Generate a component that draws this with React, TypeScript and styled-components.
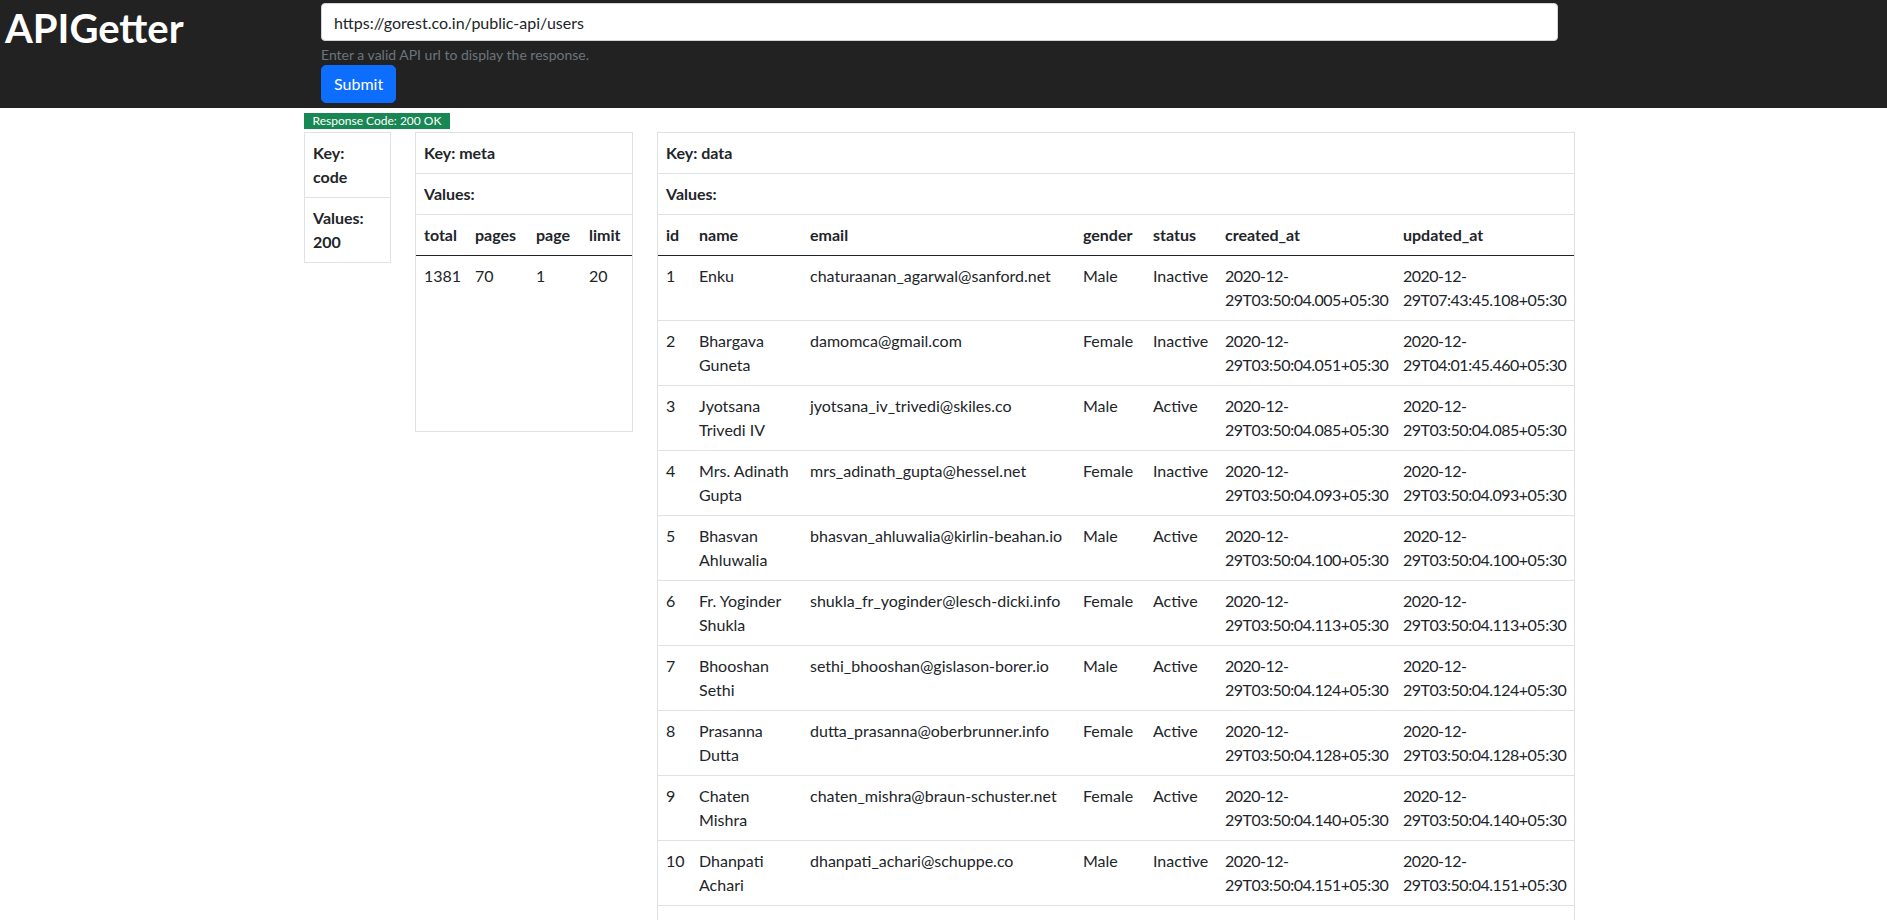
import styled, { createGlobalStyle } from "styled-components";

const GlobalStyle = createGlobalStyle`
  body {
    margin: 0;
    font-family: Lato, "Open Sans", sans-serif;
    font-size: 16px;
    line-height: 1.5;
    color: #212529;
    background: #fff;
  }
  * {
    box-sizing: border-box;
  }
`;

const Header = styled.header`
  display: flex;
  height: 108px;
  padding: 3px 0 5px 5px;
  background-color: #222;
`;

const Brand = styled.h1`
  width: 316px;
  margin: 0;
  padding-top: 1px;
  font-size: 40px;
  font-weight: 700;
  line-height: 48px;
  color: #fff;
`;

const UrlForm = styled.form`
  display: flex;
  flex-direction: column;
  align-items: flex-start;
  width: 1237px;
`;

const UrlInput = styled.input`
  width: 100%;
  height: 38px;
  padding: 6px 12px;
  border: 1px solid #ced4da;
  border-radius: 4px;
  font-family: inherit;
  font-size: 16px;
  color: #212529;
  background: #fff;
`;

const HelpText = styled.div`
  margin-top: 4px;
  font-size: 14px;
  line-height: 20px;
  color: #6c757d;
`;

const SubmitButton = styled.button`
  height: 38px;
  padding: 6px 12px;
  border: 1px solid #0d6efd;
  border-radius: 5px;
  background-color: #0d6efd;
  font-family: inherit;
  font-size: 16px;
  line-height: 24px;
  color: #fff;
  cursor: pointer;
`;

const Main = styled.main`
  padding: 5px 0 0 304px;
`;

const Badge = styled.div`
  width: 146px;
  height: 16px;
  background-color: #198754;
  font-size: 12px;
  line-height: 16px;
  text-align: center;
  white-space: nowrap;
  color: #fff;
`;

const Panels = styled.div`
  display: flex;
  align-items: flex-start;
  gap: 24px;
  margin-top: 3px;
`;

const Panel = styled.section<{ $width: number }>`
  width: ${(p) => p.$width}px;
  border: 1px solid #dee2e6;
`;

const KeyRow = styled.div`
  padding: 8px;
  font-weight: 700;
  line-height: 24px;
  border-bottom: 1px solid #dee2e6;
  &:last-child {
    border-bottom: none;
  }
`;

const ValueTable = styled.table`
  width: 100%;
  table-layout: fixed;
  border-collapse: collapse;
`;

const HeadRow = styled.tr`
  border-bottom: 1px solid #212529;
`;

const HeadCell = styled.th`
  padding: 8px;
  text-align: left;
  font-weight: 700;
  line-height: 24px;
  vertical-align: bottom;
`;

const BodyRow = styled.tr<{ $height?: number }>`
  height: ${(p) => (p.$height ? `${p.$height}px` : "auto")};
  border-bottom: 1px solid #dee2e6;
  &:last-child {
    border-bottom: none;
  }
`;

const BodyCell = styled.td<{ $tight?: boolean }>`
  padding: 8px;
  line-height: 24px;
  vertical-align: top;
  letter-spacing: ${(p) => (p.$tight ? "-0.5px" : "normal")};
`;

interface IColumn {
  key: string;
  width: number;
  tight?: boolean;
}

const metaColumns: IColumn[] = [
  { key: "total", width: 51 },
  { key: "pages", width: 61 },
  { key: "page", width: 53 },
  { key: "limit", width: 51 },
];

const dataColumns: IColumn[] = [
  { key: "id", width: 33 },
  { key: "name", width: 111 },
  { key: "email", width: 273 },
  { key: "gender", width: 70 },
  { key: "status", width: 72 },
  { key: "created_at", width: 178, tight: true },
  { key: "updated_at", width: 179, tight: true },
];

const meta = [{ total: 1381, pages: 70, page: 1, limit: 20 }];

const stamp = (t: string) => `2020-12-29T${t}+05:30`;

const users = [
  { id: 1, name: "Enku", email: "chaturaanan_agarwal@sanford.net", gender: "Male", status: "Inactive", created_at: stamp("03:50:04.005"), updated_at: stamp("07:43:45.108") },
  { id: 2, name: "Bhargava Guneta", email: "damomca@gmail.com", gender: "Female", status: "Inactive", created_at: stamp("03:50:04.051"), updated_at: stamp("04:01:45.460") },
  { id: 3, name: "Jyotsana Trivedi IV", email: "jyotsana_iv_trivedi@skiles.co", gender: "Male", status: "Active", created_at: stamp("03:50:04.085"), updated_at: stamp("03:50:04.085") },
  { id: 4, name: "Mrs. Adinath Gupta", email: "mrs_adinath_gupta@hessel.net", gender: "Female", status: "Inactive", created_at: stamp("03:50:04.093"), updated_at: stamp("03:50:04.093") },
  { id: 5, name: "Bhasvan Ahluwalia", email: "bhasvan_ahluwalia@kirlin-beahan.io", gender: "Male", status: "Active", created_at: stamp("03:50:04.100"), updated_at: stamp("03:50:04.100") },
  { id: 6, name: "Fr. Yoginder Shukla", email: "shukla_fr_yoginder@lesch-dicki.info", gender: "Female", status: "Active", created_at: stamp("03:50:04.113"), updated_at: stamp("03:50:04.113") },
  { id: 7, name: "Bhooshan Sethi", email: "sethi_bhooshan@gislason-borer.io", gender: "Male", status: "Active", created_at: stamp("03:50:04.124"), updated_at: stamp("03:50:04.124") },
  { id: 8, name: "Prasanna Dutta", email: "dutta_prasanna@oberbrunner.info", gender: "Female", status: "Active", created_at: stamp("03:50:04.128"), updated_at: stamp("03:50:04.128") },
  { id: 9, name: "Chaten Mishra", email: "chaten_mishra@braun-schuster.net", gender: "Female", status: "Active", created_at: stamp("03:50:04.140"), updated_at: stamp("03:50:04.140") },
  { id: 10, name: "Dhanpati Achari", email: "dhanpati_achari@schuppe.co", gender: "Male", status: "Inactive", created_at: stamp("03:50:04.151"), updated_at: stamp("03:50:04.151") },
  { id: 11, name: "Gopi Nair", email: "nair_gopi@kuhn.org", gender: "Male", status: "Active", created_at: stamp("03:50:04.162"), updated_at: stamp("03:50:04.162") },
  { id: 12, name: "Anjali Menon", email: "menon_anjali@hettinger.biz", gender: "Female", status: "Inactive", created_at: stamp("03:50:04.170"), updated_at: stamp("03:50:04.170") },
];

type Row = Record<string, string | number>;

interface IValueTable {
  columns: IColumn[];
  rows: Row[];
  rowHeight?: number;
}

function KeyValueTable({ columns, rows, rowHeight }: IValueTable) {
  return (
    <ValueTable>
      <colgroup>
        {columns.map((c) => (
          <col key={c.key} style={{ width: c.width }} />
        ))}
      </colgroup>
      <thead>
        <HeadRow>
          {columns.map((c) => (
            <HeadCell key={c.key}>{c.key}</HeadCell>
          ))}
        </HeadRow>
      </thead>
      <tbody>
        {rows.map((row, i) => (
          <BodyRow key={i} $height={rowHeight}>
            {columns.map((c) => (
              <BodyCell key={c.key} $tight={c.tight}>
                {row[c.key]}
              </BodyCell>
            ))}
          </BodyRow>
        ))}
      </tbody>
    </ValueTable>
  );
}

function App() {
  return (
    <>
      <GlobalStyle />
      <Header>
        <Brand>APIGetter</Brand>
        <UrlForm onSubmit={(e) => e.preventDefault()}>
          <UrlInput type="text" defaultValue="https://gorest.co.in/public-api/users" />
          <HelpText>Enter a valid API url to display the response.</HelpText>
          <SubmitButton type="submit">Submit</SubmitButton>
        </UrlForm>
      </Header>

      <Main>
        <Badge>Response Code: 200 OK</Badge>
        <Panels>
          <Panel $width={87}>
            <KeyRow>Key: code</KeyRow>
            <KeyRow>Values: 200</KeyRow>
          </Panel>

          <Panel $width={218}>
            <KeyRow>Key: meta</KeyRow>
            <KeyRow>Values:</KeyRow>
            <KeyValueTable columns={metaColumns} rows={meta} rowHeight={175} />
          </Panel>

          <Panel $width={918}>
            <KeyRow>Key: data</KeyRow>
            <KeyRow>Values:</KeyRow>
            <KeyValueTable columns={dataColumns} rows={users} />
          </Panel>
        </Panels>
      </Main>
    </>
  );
}

export default App;
